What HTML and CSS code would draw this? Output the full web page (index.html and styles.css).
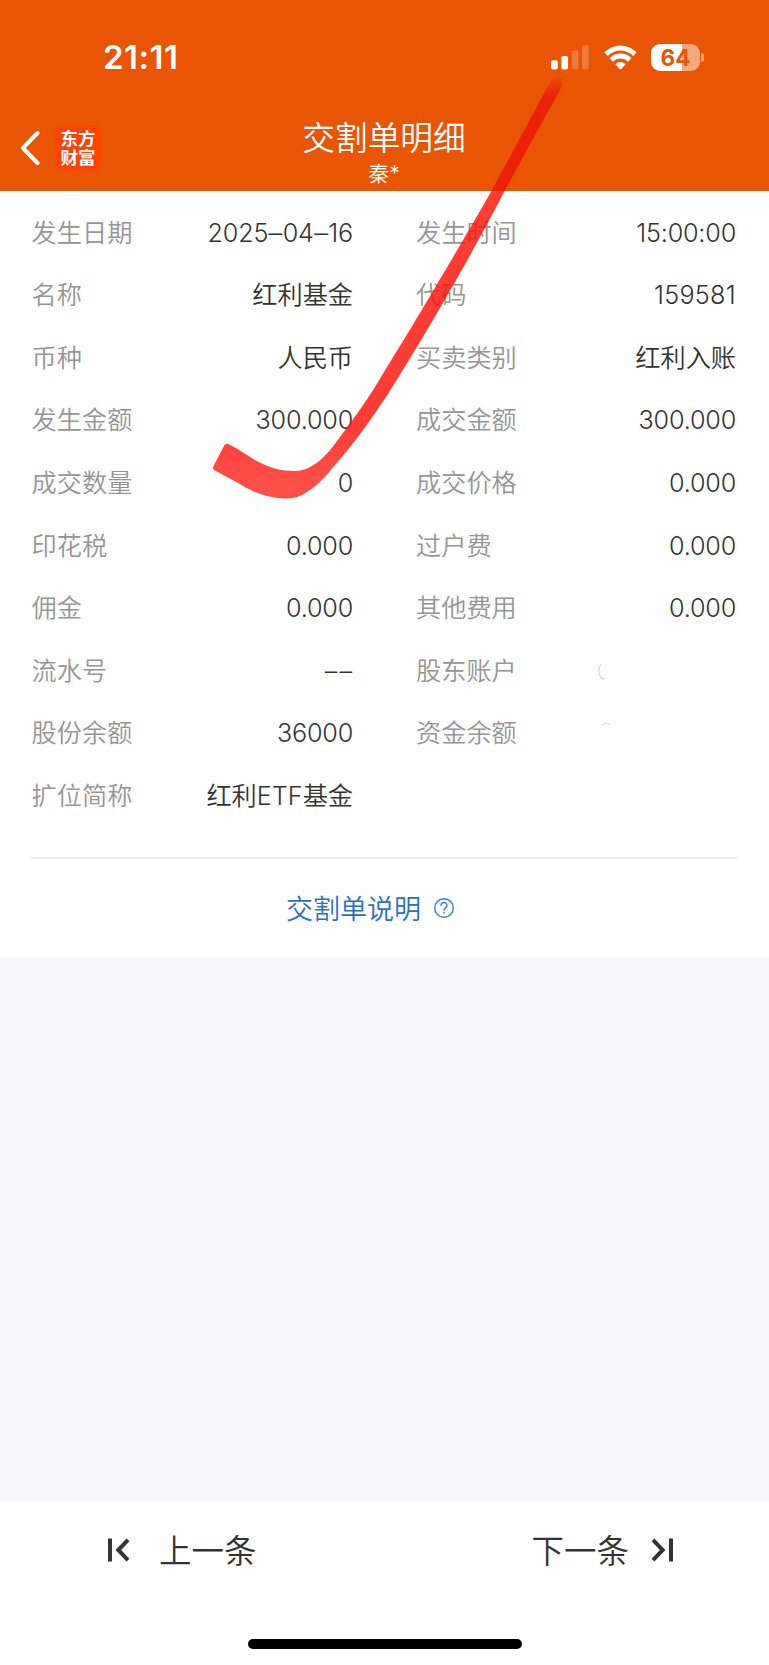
FILE: index.html
```html
<!DOCTYPE html>
<html lang="zh-CN">
<head>
<meta charset="utf-8">
<title>交割单明细</title>
<link rel="stylesheet" href="styles.css">
</head>
<body>
<div class="screen">
  <header class="header">
    <div class="status">
      <span class="clock">21:11</span>
      <div class="indicators">
        <svg class="signal" width="39" height="25" viewBox="0 0 39 25" fill="#fff">
          <rect x="0" y="15.3" width="6.8" height="9.2" rx="2"/>
          <rect x="10.3" y="11" width="6.8" height="13.5" rx="2"/>
          <rect x="20.7" y="5.5" width="6.8" height="19" rx="2" opacity=".22"/>
          <rect x="31" y="0.3" width="6.8" height="24.2" rx="2" opacity=".22"/>
        </svg>
        <svg class="wifi" width="33" height="25" viewBox="0 0 33 25">
          <g fill="none" stroke="#fff" stroke-width="5">
            <path d="M2 9.100Q8.500 2.900 16.500 2.900T31 9.100"/>
            <path d="M7.200 14.800Q11.300 11.100 16.500 11.100T25.800 14.800"/>
          </g>
          <path fill="#fff" d="M11.300 19.200Q16.500 14.900 21.700 19.200L17.300 24Q16.500 24.700 15.700 24Z"/>
        </svg>
        <div class="battery"><span class="battery-body">64</span><span class="battery-nub"></span></div>
      </div>
    </div>
    <div class="nav">
      <div class="nav-left">
        <svg width="20" height="34" viewBox="0 0 20 34" fill="none" stroke="#fff" stroke-width="4" stroke-linecap="round" stroke-linejoin="round"><path d="M17.500 2L3 17L17.500 32"/></svg>
        <div class="brand">东方财富</div>
      </div>
      <div class="heading">
        <h1 class="title">交割单明细</h1>
        <span class="owner">秦*</span>
      </div>
    </div>
  </header>
  <main class="card">
    <dl class="fields">
      <div class="field"><dt>发生日期</dt><dd class="num">2025<span class="dash">–</span>04<span class="dash">–</span>16</dd></div>
      <div class="field"><dt>发生时间</dt><dd class="num">15:00:00</dd></div>
      <div class="field"><dt>名称</dt><dd>红利基金</dd></div>
      <div class="field"><dt>代码</dt><dd class="num code">159581</dd></div>
      <div class="field"><dt>币种</dt><dd>人民币</dd></div>
      <div class="field"><dt>买卖类别</dt><dd>红利入账</dd></div>
      <div class="field"><dt>发生金额</dt><dd class="num">300.000</dd></div>
      <div class="field"><dt>成交金额</dt><dd class="num">300.000</dd></div>
      <div class="field"><dt>成交数量</dt><dd class="num">0</dd></div>
      <div class="field"><dt>成交价格</dt><dd class="num">0.000</dd></div>
      <div class="field"><dt>印花税</dt><dd class="num">0.000</dd></div>
      <div class="field"><dt>过户费</dt><dd class="num">0.000</dd></div>
      <div class="field"><dt>佣金</dt><dd class="num">0.000</dd></div>
      <div class="field"><dt>其他费用</dt><dd class="num">0.000</dd></div>
      <div class="field"><dt>流水号</dt><dd class="num empty">––</dd></div>
      <div class="field"><dt>股东账户</dt><dd><svg class="erased" width="139" height="24" viewBox="0 0 139 24" fill="none" stroke="#d6d6d6" stroke-width="1.200"><path d="M4 5C0 11 2 20 8 20"/></svg></dd></div>
      <div class="field"><dt>股份余额</dt><dd class="num">36000</dd></div>
      <div class="field"><dt>资金余额</dt><dd><svg class="erased" width="139" height="24" viewBox="0 0 139 24" fill="none" stroke="#dedede" stroke-width="1.200"><path d="M4 5Q8 0 13 4"/></svg></dd></div>
      <div class="field"><dt>扩位简称</dt><dd>红利<span class="latin">ETF</span>基金</dd></div>
    </dl>
    <div class="help">
      <span>交割单说明</span>
      <svg width="22" height="22" viewBox="0 0 22 22" fill="none" stroke="#3480d2" stroke-width="1.400"><circle cx="11" cy="11" r="9.300"/><path d="M8 8.600C8 4.500 14 4.600 14 8.400C14 10.600 11 10.800 11 13.400" stroke-linecap="round"/><circle cx="11" cy="15.800" r=".9" fill="#3480d2" stroke="none"/></svg>
    </div>
  </main>
  <div class="blank"></div>
  <footer class="footer">
    <div class="pager">
      <div class="page-link">
        <svg width="22" height="24" viewBox="0 0 22 24" fill="none" stroke="#333" stroke-width="4"><path d="M2 .5V23.500M20 1.800L10.300 12L20 22.200"/></svg>
        <span>上一条</span>
      </div>
      <div class="page-link next">
        <span>下一条</span>
        <svg width="22" height="24" viewBox="0 0 22 24" fill="none" stroke="#333" stroke-width="4"><path d="M20 .5V23.500M2 1.800L11.700 12L2 22.200"/></svg>
      </div>
    </div>
    <div class="home"></div>
  </footer>
  <svg class="marker" width="769" height="520" viewBox="0 0 769 520">
    <defs>
      <linearGradient id="ink" gradientUnits="userSpaceOnUse" x1="0" y1="0" x2="0" y2="520">
        <stop offset=".146" stop-color="#ee1f08" stop-opacity=".1"/>
        <stop offset=".185" stop-color="#ee1f08" stop-opacity=".95"/>
        <stop offset=".3673" stop-color="#ee1f08"/>
        <stop offset=".3673" stop-color="#ff0f05" stop-opacity=".81"/>
        <stop offset=".82" stop-color="#ff0f05" stop-opacity=".81"/>
        <stop offset=".93" stop-color="#ff140a" stop-opacity=".75"/>
      </linearGradient>
    </defs>
    <path fill="url(#ink)" d="M230 445C239 449 246 455 255 460C269 468 281 471 295 471C304 471 311 467 318 462C328 454 334 445 340 437C353 420 370 396 384 372C408 334 460 246 492 190L550 82Q556 74 560 77Q563 81 561 88L505 190C473 253 424 337 388 394C370 421 353 445 335 465C326 476 316 487 307 492Q297 499 285 498.500C263 498 248 489 238 483L214 470Q212 469 214 465L224 446Q226 442 230 445Z"/>
  </svg>
</div>
</body>
</html>
```
FILE: styles.css
```css
* { box-sizing: border-box; }
body { margin: 0; background: #fff; }
svg { display: block; flex: none; }
.screen {
  position: relative;
  display: flex;
  flex-direction: column;
  width: 769px;
  height: 1665px;
  overflow: hidden;
  color: #333;
  font-family: Inter, "Noto Sans CJK SC", sans-serif;
}
.header { height: 191px; background: #ea5504; color: #fff; }
.status {
  display: flex;
  justify-content: space-between;
  align-items: center;
  height: 115px;
  padding: 0 65px 0 103px;
}
.clock { padding-bottom: 2px; font-size: 33px; font-weight: 600; letter-spacing: 0.5px; }
.indicators { display: flex; align-items: center; }
.wifi { margin: 0 14px; }
.battery { display: flex; align-items: center; gap: 1px; }
.battery-body {
  width: 49px;
  height: 27px;
  border-radius: 9px;
  background: linear-gradient(90deg, #fff 64%, #f5a77e 64%);
  color: #ea5504;
  font-size: 22.500px;
  font-weight: 700;
  line-height: 28px;
  text-align: center;
}
.battery-nub { width: 3px; height: 9px; border-radius: 0 4px 4px 0; background: #f5a77e; }
.nav {
  display: grid;
  grid-template-columns: 1fr auto 1fr;
  height: 76px;
}
.nav-left { display: flex; align-items: center; gap: 15px; height: 66px; padding-left: 20px; }
.brand {
  width: 46px;
  height: 46px;
  padding: 3px 5px;
  border-radius: 9px;
  background: #ff4302;
  font-family: "Noto Sans CJK SC", sans-serif;
  font-size: 17.500px;
  font-weight: 700;
  line-height: 19px;
  text-align: center;
  word-break: break-all;
}
.heading { display: flex; flex-direction: column; align-items: center; padding: 1px 1px 0 0; }
.title { margin: 0; font-size: 32.700px; font-weight: 350; line-height: 44px; }
.owner { font-size: 21px; font-weight: 350; line-height: 28px; }
.card { height: 766px; padding: 10px 32px 0 31px; }
.fields {
  display: grid;
  grid-template-columns: 322px 320px;
  column-gap: 63px;
  grid-auto-rows: 62.550px;
  height: 658px;
  margin: 0;
  border-bottom: 2px solid #ededed;
}
.field { display: flex; justify-content: space-between; align-items: center; padding-top: 1px; font-size: 25.200px; line-height: 36px; }
.field dt { color: #959595; font-weight: 350; }
.field:nth-child(odd) dt { padding-left: 0.6px; }
.field dd { margin: 0; font-weight: 350; }
.field .num { letter-spacing: -0.2px; }
.field .code { letter-spacing: 0.3px; }
.dash { margin: 0 1px; letter-spacing: 0; display: inline-block; transform: scaleX(1.1); }
.field .empty { letter-spacing: 2px; margin-right: -1px; }
.latin { font-weight: 300; }
.help {
  display: flex;
  align-items: center;
  justify-content: center;
  gap: 12px;
  height: 97px;
  padding-right: 27px;
  color: #2a70c0;
  font-size: 27px;
  font-weight: 350;
}
.blank { height: 544px; background: #f6f8fb; }
.footer { display: flex; flex-direction: column; align-items: center; justify-content: space-between; height: 164px; padding-bottom: 16px; }
.pager { display: flex; justify-content: space-between; width: 100%; height: 98px; padding: 0 96px 0 108px; }
.page-link { display: flex; align-items: center; gap: 29px; font-size: 32.500px; font-weight: 350; }
.page-link span { padding-bottom: 4px; }
.next { gap: 22px; }
.home { width: 274px; height: 10px; border-radius: 5px; background: #000; }
.marker { position: absolute; top: 0; left: 0; pointer-events: none; }
```
